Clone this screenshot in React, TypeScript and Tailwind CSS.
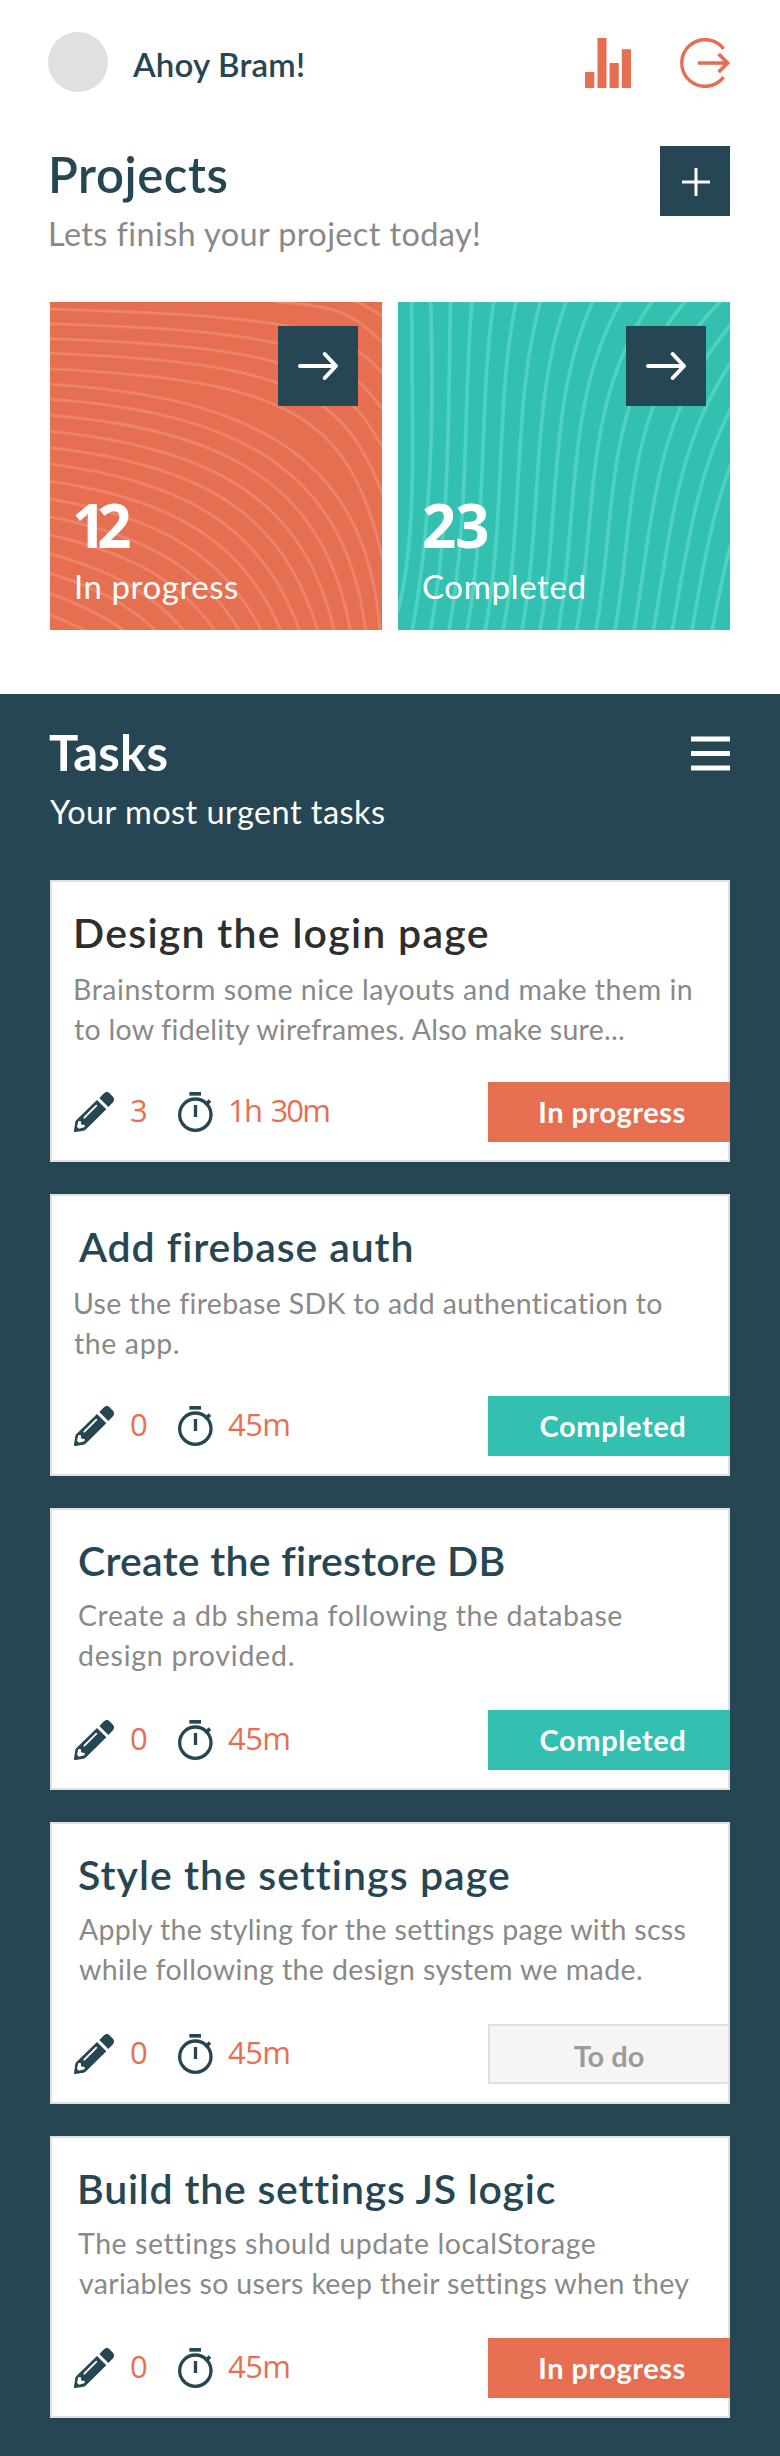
type Curve = [number, number, number, number, number, number];

// Start x, start y, start slope (dy/dx), end x, end y, end slope (dx/dy)
const WAVES: Curve[] = [
  [980, 36, 0.45, 1056, 77, 1.6],
  [740, 36, 0.06, 1056, 157, 0.95],
  [60, 57, 0.03, 1056, 248, 0.85],
  [60, 101, 0.03, 1056, 355, 0.72],
  [60, 146, 0.035, 1056, 470, 0.53],
  [60, 190, 0.04, 1056, 610, 0.37],
  [60, 236, 0.05, 1056, 800, 0.23],
  [60, 283, 0.06, 1050, 1020, 0.08],
  [60, 328, 0.07, 1007, 1020, 0.13],
  [60, 376, 0.08, 961, 1020, 0.18],
  [60, 424, 0.1, 912, 1020, 0.23],
  [60, 473, 0.11, 862, 1020, 0.29],
  [60, 522, 0.13, 808, 1020, 0.36],
  [60, 574, 0.15, 752, 1020, 0.43],
  [60, 627, 0.17, 693, 1020, 0.51],
  [60, 680, 0.2, 627, 1020, 0.6],
  [60, 735, 0.23, 553, 1020, 0.7],
  [60, 792, 0.27, 460, 1020, 0.85],
  [60, 850, 0.31, 375, 1020, 1.05],
  [60, 910, 0.36, 280, 1020, 1.4],
  [60, 975, 0.41, 165, 1020, 2.2],
];

function wavePath([x0, y0, s, x3, y3, m]: Curve) {
  const k = y3 === 1020 ? 0.71 : 0.82;
  const cy = (y0 + s * (x3 - m * y3 - x0)) / (1 - s * m);
  const cx = x3 - m * (y3 - cy);
  const p1 = `${x0 + (cx - x0) * k} ${y0 + (cy - y0) * k}`;
  const p2 = `${x3 + (cx - x3) * k} ${y3 + (cy - y3) * k}`;
  return `M${x0} ${y0}C${p1} ${p2} ${x3} ${y3}`;
}

// Start x, start y, start slope (dx/dy), end x
const REEDS: [number, number, number, number][] = [
  [152, 36, 0.03, 97],
  [212, 36, -0.03, 152],
  [276, 36, -0.09, 207],
  [341, 36, -0.15, 261],
  [408, 36, -0.21, 316],
  [481, 36, -0.28, 370],
  [558, 36, -0.36, 426],
  [638, 36, -0.46, 480],
  [722, 36, -0.57, 535],
  [815, 36, -0.7, 590],
  [914, 36, -0.84, 648],
  [1020, 36, -1, 705],
  [1050, 107, -0.85, 762],
  [1050, 222, -0.67, 820],
  [1050, 360, -0.51, 877],
  [1050, 530, -0.38, 936],
  [1050, 770, -0.26, 997],
];

function reedPath([x0, y0, s, x3]: [number, number, number, number]) {
  const h = 1020 - y0;
  return `M${x0} ${y0}C${x0 + s * h * 0.3} ${y0 + h * 0.3} ${x3 + 0.18 * h * 0.35} ${1020 - h * 0.35} ${x3} 1020`;
}

function Waves() {
  return (
    <svg className="absolute inset-0 h-full w-full" viewBox="60 36 996 984" fill="none" stroke="#ec8469" strokeWidth="9" strokeLinecap="square">
      {WAVES.map((w, i) => (
        <path key={i} d={wavePath(w)} />
      ))}
    </svg>
  );
}

function Reeds() {
  return (
    <svg className="absolute inset-0 h-full w-full" viewBox="54 36 996 984" fill="none" stroke="#50d2c2" strokeWidth="11" strokeLinecap="square">
      <path d="M95 36C97 200 98 350 98 470C98 700 82 860 54 960" />
      {REEDS.map((r, i) => (
        <path key={i} d={reedPath(r)} />
      ))}
    </svg>
  );
}

function ArrowButton() {
  return (
    <button className="relative mt-6 mr-6 size-20 self-end bg-[#264653]">
      <svg viewBox="0 0 80 80" className="size-20" fill="none" stroke="#fff" strokeWidth="4" strokeLinecap="round" strokeLinejoin="round">
        <path d="M22 40H57" />
        <path d="M46.7 28L58 40L46.7 52" />
      </svg>
    </button>
  );
}

function PencilIcon() {
  return (
    <svg viewBox="24 17 120 120" className="mt-[10px] size-10 shrink-0">
      <path
        fill="#264653"
        d="M100 35L114 21Q121 14 129 19L141 31Q147 39 141 48L127 62ZM93 41L121 69L61 128Q58 132 53 133L28 137Q24 138 24 133L28 106Q29 103 32 100Z"
      />
      <path d="M55 94L91 58" stroke="#fff" strokeWidth="5.5" strokeLinecap="round" />
      <path d="M37 104L45 105V114L57 117L55 123L39 127L33 121Z" fill="#fff" />
    </svg>
  );
}

function StopwatchIcon() {
  return (
    <svg viewBox="354 66 105 120" className="mt-[10px] h-10 w-[35px] shrink-0" fill="none" stroke="#264653">
      <path d="M388 71.5H423" strokeWidth="11" />
      <circle cx="406" cy="134" r="47" strokeWidth="10" />
      <path d="M406.5 105V141" strokeWidth="10" />
      <path d="M436 105L450 92" strokeWidth="11" />
    </svg>
  );
}

type Status = "progress" | "completed" | "todo";

const STATUS: Record<Status, { label: string; style: string }> = {
  progress: { label: "In progress", style: "bg-[#e76f51] pl-[6px] leading-[59px] tracking-[0.5px] text-white" },
  completed: { label: "Completed", style: "bg-[#34c0b1] pl-[8px] leading-[59px] tracking-[0.59px] text-white" },
  todo: { label: "To do", style: "border-2 border-[#e0e0e0] bg-[#f5f5f5] leading-[59px] text-[#9b9b9b]" },
};

interface Task {
  title: string;
  titleStyle: string;
  bodyStyle: string;
  lines: { text: string; style: string }[];
  edits: string;
  time: string;
  timeStyle: string;
  status: Status;
}

const TASKS: Task[] = [
  {
    title: "Design the login page",
    titleStyle: "pl-[21px] tracking-[1.27px] text-[#2e2e2e]",
    bodyStyle: "mt-[12px]",
    lines: [
      { text: "Brainstorm some nice layouts and make them in", style: "pl-[21px] tracking-[0.54px]" },
      { text: "to low fidelity wireframes. Also make sure...", style: "pl-[22px] tracking-[0.28px]" },
    ],
    edits: "3",
    time: "1h 30m",
    timeStyle: "tracking-[-1.8px] [word-spacing:3px]",
    status: "progress",
  },
  {
    title: "Add firebase auth",
    titleStyle: "pl-[27px] tracking-[0.89px] text-[#264653]",
    bodyStyle: "mt-[12px]",
    lines: [
      { text: "Use the firebase SDK to add authentication to", style: "pl-[21px] tracking-[0.34px]" },
      { text: "the app.", style: "pl-[22px] tracking-[0.6px]" },
    ],
    edits: "0",
    time: "45m",
    timeStyle: "tracking-[-0.6px]",
    status: "completed",
  },
  {
    title: "Create the firestore DB",
    titleStyle: "pl-[26px] tracking-[0.25px] text-[#264653]",
    bodyStyle: "mt-[10px]",
    lines: [
      { text: "Create a db shema following the database", style: "pl-[26px] tracking-[0.58px]" },
      { text: "design provided.", style: "pl-[26px] tracking-[0.76px]" },
    ],
    edits: "0",
    time: "45m",
    timeStyle: "tracking-[-0.6px]",
    status: "completed",
  },
  {
    title: "Style the settings page",
    titleStyle: "pl-[26px] tracking-[1.05px] text-[#264653]",
    bodyStyle: "mt-[10px]",
    lines: [
      { text: "Apply the styling for the settings page with scss", style: "pl-[27px] tracking-[0.3px]" },
      { text: "while following the design system we made.", style: "pl-[27px] tracking-[0.4px]" },
    ],
    edits: "0",
    time: "45m",
    timeStyle: "tracking-[-0.6px]",
    status: "todo",
  },
  {
    title: "Build the settings JS logic",
    titleStyle: "pl-[25px] tracking-[0.77px] text-[#264653]",
    bodyStyle: "mt-[10px]",
    lines: [
      { text: "The settings should update localStorage", style: "pl-[26px] tracking-[0.56px]" },
      { text: "variables so users keep their settings when they", style: "pl-[27px] tracking-[0.32px]" },
    ],
    edits: "0",
    time: "45m",
    timeStyle: "tracking-[-0.6px]",
    status: "progress",
  },
];

function TaskCard({ task }: { task: Task }) {
  const status = STATUS[task.status];
  return (
    <article className="flex h-[282px] flex-col border-2 border-[#e0e0e0] bg-white pt-[27px]">
      <h3 className={`text-[41px] leading-[48px] font-semibold whitespace-nowrap ${task.titleStyle}`}>{task.title}</h3>
      <p className={`text-[28.5px] leading-[40px] whitespace-nowrap text-[#898989] ${task.bodyStyle}`}>
        {task.lines.map((line) => (
          <span key={line.text} className={`block ${line.style}`}>
            {line.text}
          </span>
        ))}
      </p>
      <div className="-mr-0.5 mt-auto mb-[18px] flex h-[60px] items-start pl-[22px] text-[31px] leading-[40px] text-[#e76f51]">
        <PencilIcon />
        <span className="mt-2 ml-[16px] w-[48px] font-['Open_Sans',sans-serif]">{task.edits}</span>
        <StopwatchIcon />
        <span className={`mt-2 ml-[15px] font-['Open_Sans',sans-serif] whitespace-nowrap ${task.timeStyle}`}>{task.time}</span>
        <span className={`ml-auto h-[60px] w-[242px] text-center text-[29px] font-bold ${status.style}`}>{status.label}</span>
      </div>
    </article>
  );
}

export default function App() {
  return (
    <div className="min-h-[2456px] w-[780px] bg-white font-['Lato',sans-serif]">
      <header className="flex h-[92px] items-start pt-8 pr-[50px] pl-12">
        <div className="size-[60px] rounded-full bg-[#e0e0e0]" />
        <p className="mt-3 ml-[25px] text-[33px] leading-[40px] font-semibold tracking-[0.2px] text-[#264653]">Ahoy Bram!</p>
        <svg viewBox="0 0 46 50" className="mt-1.5 ml-auto h-[50px] w-[46px]" fill="#e76f51">
          <path d="M0 34H9.3V50H0ZM12.5 0H21.5V50H12.5ZM24.6 25H33.8V50H24.6ZM36.8 11.3H46V50H36.8Z" />
        </svg>
        <svg viewBox="0 0 50 50" className="mt-1.5 ml-[49px] size-[50px]" fill="none" stroke="#e76f51">
          <path d="M43.6 10.9A23.3 23.3 0 1 0 43.6 39.1" strokeWidth="3.4" />
          <path d="M18 25H47" strokeWidth="3.6" />
          <path d="M38.6 16L47.6 25L38.6 34" strokeWidth="3.8" />
        </svg>
      </header>

      <section className="px-[50px] pt-[53px] pb-16">
        <div className="flex justify-between">
          <div>
            <h1 className="-ml-[2px] pt-px text-[49px] leading-[56px] font-semibold tracking-[0.6px] text-[#264653]">Projects</h1>
            <p className="-ml-[2px] mt-[12px] text-[32.5px] leading-[40px] tracking-[0.38px] text-[#898989]">Lets finish your project today!</p>
          </div>
          <button className="mt-px size-[70px] bg-[#264653]">
            <svg viewBox="0 0 70 70" className="size-[70px]" stroke="#fff" strokeWidth="3">
              <path d="M22 36H50M36 22V50" />
            </svg>
          </button>
        </div>
        <div className="mt-12 grid grid-cols-2 gap-4 text-white">
          <div className="relative flex h-[328px] flex-col overflow-hidden bg-[#e76f51]">
            <Waves />
            <ArrowButton />
            <p className="relative mt-[89px] pl-[22px] font-['Open_Sans',sans-serif] text-[60px] leading-[60px] font-bold tracking-[-9px]">12</p>
            <p className="relative mt-[11px] pl-[24px] text-[33px] leading-[40px] tracking-[0.56px]">In progress</p>
          </div>
          <div className="relative flex h-[328px] flex-col overflow-hidden bg-[#34c0b1]">
            <Reeds />
            <ArrowButton />
            <p className="relative mt-[89px] pl-[24px] font-['Open_Sans',sans-serif] text-[60px] leading-[60px] font-bold tracking-[-1px]">23</p>
            <p className="relative mt-[11px] pl-[24px] text-[33px] leading-[40px] tracking-[0.66px]">Completed</p>
          </div>
        </div>
      </section>

      <section className="bg-[#264653] px-[50px] pt-[29px] pb-[38px]">
        <div className="flex justify-between text-white">
          <div>
            <h2 className="-ml-px pt-px text-[49px] leading-[56px] font-bold tracking-[0.2px]">Tasks</h2>
            <p className="mt-[12px] text-[32.5px] leading-[40px] tracking-[0.45px]">Your most urgent tasks</p>
          </div>
          <svg viewBox="0 0 39 36" className="mt-[13px] h-9 w-[39px]" stroke="#fff" strokeWidth="4.8">
            <path d="M0 3H39M0 17.5H39M0 32H39" />
          </svg>
        </div>
        <div className="mt-12 flex flex-col gap-8">
          {TASKS.map((task) => (
            <TaskCard key={task.title} task={task} />
          ))}
        </div>
      </section>
    </div>
  );
}
